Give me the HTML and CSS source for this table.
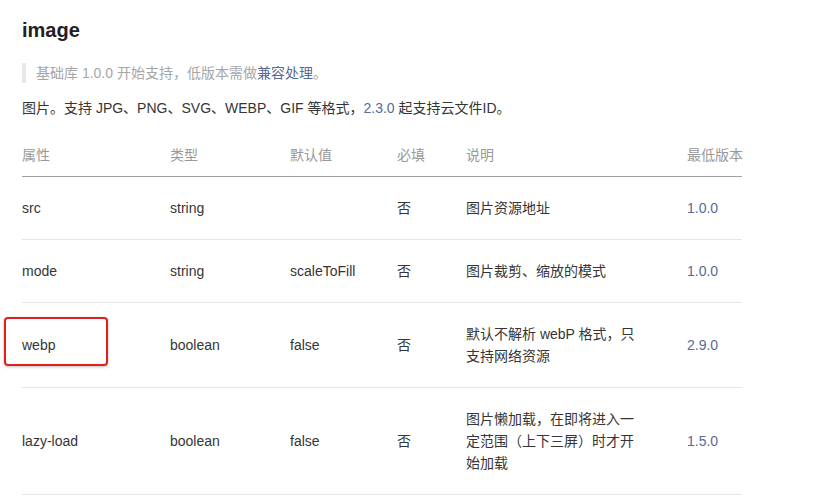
FILE: index.html
```html
<!DOCTYPE html>
<html lang="zh-CN">
<head>
<meta charset="utf-8">
<title>image</title>
<link rel="stylesheet" href="styles.css">
</head>
<body>
<main class="doc">
  <h2 class="title">image</h2>
  <blockquote class="note">基础库 1.0.0 开始支持，低版本需做<a class="link" href="#">兼容处理</a>。</blockquote>
  <p class="intro">图片。支持 JPG、PNG、SVG、WEBP、GIF 等格式，<a class="link" href="#">2.3.0</a> 起支持云文件ID。</p>
  <table class="props">
    <colgroup>
      <col class="c-name"><col class="c-type"><col class="c-def"><col class="c-req"><col class="c-desc"><col class="c-ver">
    </colgroup>
    <thead>
      <tr><th>属性</th><th>类型</th><th>默认值</th><th>必填</th><th>说明</th><th>最低版本</th></tr>
    </thead>
    <tbody>
      <tr><td>src</td><td>string</td><td></td><td>否</td><td class="desc">图片资源地址</td><td><a class="link" href="#">1.0.0</a></td></tr>
      <tr><td>mode</td><td>string</td><td>scaleToFill</td><td>否</td><td class="desc">图片裁剪、缩放的模式</td><td><a class="link" href="#">1.0.0</a></td></tr>
      <tr><td><span class="marked">webp<span class="mark-box"></span></span></td><td>boolean</td><td>false</td><td>否</td><td class="desc">默认不解析 webP 格式，只支持网络资源</td><td><a class="link" href="#">2.9.0</a></td></tr>
      <tr><td>lazy-load</td><td>boolean</td><td>false</td><td>否</td><td class="desc">图片懒加载，在即将进入一定范围（上下三屏）时才开始加载</td><td><a class="link" href="#">1.5.0</a></td></tr>
    </tbody>
  </table>
</main>
</body>
</html>
```

FILE: styles.css
```css
* { box-sizing: border-box; }
html, body { margin: 0; padding: 0; background: #fff; }
body {
  font-family: "Liberation Sans", "Noto Sans CJK SC", sans-serif;
  font-size: 14px;
  color: #353535;
  line-height: 1.6;
}
.doc {
  padding: 16px 0 0 22px;
  width: 742px;
}
.title {
  margin: 0;
  font-size: 20px;
  line-height: 28px;
  font-weight: bold;
  color: #222;
}
.note {
  margin: 19px 0 0 0;
  padding: 0 0 0 10px;
  border-left: 4px solid #e8e8e8;
  line-height: 20px;
  color: #a6a6a6;
}
.link { color: #576b95; text-decoration: none; }
.intro {
  margin: 14px 0 0 0;
  line-height: 22.4px;
}
.props {
  margin-top: 15px;
  width: 720px;
  border-collapse: collapse;
  table-layout: fixed;
}
.c-name { width: 148px; }
.c-type { width: 120px; }
.c-def { width: 107px; }
.c-req { width: 69px; }
.c-desc { width: 221px; }
.c-ver { width: 55px; }
.props th {
  text-align: left;
  font-weight: normal;
  color: #999;
  padding: 10px 0;
  line-height: 22px;
  border-bottom: 1px solid #a0a0a0;
  white-space: nowrap;
}
.props td {
  padding: 20px 0;
  line-height: 22px;
  border-bottom: 1px solid #e5e5e5;
  vertical-align: middle;
}
.props td.desc { padding-right: 46px; }
.marked { position: relative; }
.mark-box {
  position: absolute;
  left: -18px;
  top: -20px;
  width: 104px;
  height: 49px;
  border: 2px solid #e0201b;
  border-radius: 4px;
  box-shadow: 0 1px 3px rgba(0,0,0,0.25);
}
```
